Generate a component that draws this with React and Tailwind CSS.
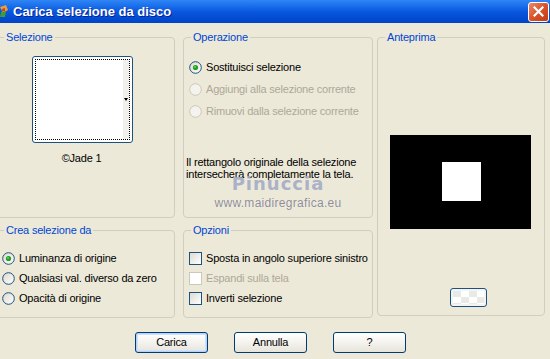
import React from "react";

const Group = ({ label, className, children }) => (
  <div className={"relative border border-[#D0CEBF] rounded-[4px] " + className}>
    <span className="absolute -top-[7px] left-[7px] px-[2px] bg-[#ECE9D8] text-[#0046D5] leading-[13px]">
      {label}
    </span>
    {children}
  </div>
);

const Radio = ({ checked, disabled }) => (
  <svg width="13" height="13" viewBox="0 0 13 13" className="shrink-0">
    <defs>
      <linearGradient id="rg" x1="0" y1="0" x2="1" y2="1">
        <stop offset="0" stopColor="#DCD9CD" />
        <stop offset="1" stopColor="#FFFFFF" />
      </linearGradient>
    </defs>
    <circle
      cx="6.5"
      cy="6.5"
      r="5.8"
      fill={disabled ? "#F4F3EE" : "url(#rg)"}
      stroke={disabled ? "#CAC8BB" : "#1C5180"}
      strokeWidth="1"
    />
    {checked && (
      <>
        <circle cx="6.5" cy="6.5" r="2.6" fill="#21A121" />
        <circle cx="6" cy="6" r="1" fill="#5CD05C" />
      </>
    )}
  </svg>
);

const Check = ({ disabled }) => (
  <div
    className={
      "w-[13px] h-[13px] shrink-0 border " +
      (disabled
        ? "border-[#CAC8BB] bg-white"
        : "border-[#1C5180] bg-gradient-to-br from-[#DCDBD3] to-white")
    }
  />
);

const Option = ({ children, disabled, control }) => (
  <div
    className={
      "flex items-center gap-[4px] h-[20px] whitespace-nowrap " +
      (disabled ? "text-[#ACA899]" : "text-black")
    }
  >
    {control}
    <span>{children}</span>
  </div>
);

const XpButton = ({ children, focused }) => (
  <button
    className={
      "w-[73px] h-[21px] rounded-[3px] border border-[#003C74] bg-gradient-to-b from-white via-[#F4F3EE] to-[#E6E4DA] text-black leading-none " +
      (focused ? "shadow-[inset_0_0_0_1px_#B9D1F6,inset_0_0_0_2px_#CEE3FB]" : "")
    }
  >
    {children}
  </button>
);

export default function App() {
  return (
    <div
      className="w-[550px] h-[359px] overflow-hidden bg-[#ECE9D8] text-[11px] tracking-[-0.2px] text-black"
      style={{ fontFamily: '"Liberation Sans", Arial, sans-serif' }}
    >
      {/* title bar */}
      <div className="h-[23px] flex items-center relative tracking-normal bg-gradient-to-b from-[#2F86F5] via-[#0858E0] to-[#0043C8]">
        <svg width="9" height="16" viewBox="0 0 9 16">
          <path d="M0 3 L6 1 L8 6 L3 9 Z" fill="#E7A03A" />
          <path d="M1 8 L6 7 L5 13 L0 13 Z" fill="#3E9C3A" />
          <path d="M2 5 L5 4 L5 7 L2 7 Z" fill="#D43B2A" />
        </svg>
        <span className="ml-[4px] text-white font-bold text-[13px] [text-shadow:1px_1px_0_#0A1E9A]">
          Carica selezione da disco
        </span>
        <div className="ml-auto mr-[1px] w-[21px] h-[20px] rounded-[3px] border border-white bg-gradient-to-br from-[#E98A6B] via-[#D9522A] to-[#C23A12] flex items-center justify-center">
          <svg width="11" height="11" viewBox="0 0 11 11">
            <path d="M1.5 1.5 L9.5 9.5 M9.5 1.5 L1.5 9.5" stroke="white" strokeWidth="2.2" strokeLinecap="square" />
          </svg>
        </div>
      </div>

      {/* panels */}
      <div className="flex pt-[14px]">
        <div className="flex flex-col -ml-[4px] w-[179px]">
          <Group label="Selezione" className="h-[181px]">
            <div className="ml-[35px] mt-[18px] w-[101px]">
              <div className="relative w-[101px] h-[87px] rounded-[3px] border border-[#1C5180] bg-white p-[2px]">
                <div className="w-full h-full border border-dotted border-black flex justify-end">
                  <div className="w-[6px] h-full bg-[#F1F0EC] flex items-center justify-center">
                    <div className="w-0 h-0 border-l-[2px] border-r-[2px] border-t-[3px] border-l-transparent border-r-transparent border-t-black" />
                  </div>
                </div>
              </div>
              <div className="mt-[9px] text-center leading-[13px] -ml-[2px]">©Jade 1</div>
            </div>
          </Group>
          <Group label="Crea selezione da" className="h-[88px] mt-[12px]">
            <div className="pl-[5px] pt-[17px]">
              <Option control={<Radio checked />}>Luminanza di origine</Option>
              <Option control={<Radio />}>Qualsiasi val. diverso da zero</Option>
              <Option control={<Radio />}>Opacità di origine</Option>
            </div>
          </Group>
        </div>

        <div className="flex flex-col ml-[8px] w-[190px]">
          <Group label="Operazione" className="h-[181px]">
            <div className="pl-[5px] pt-[18px] [&>div]:h-[22px]">
              <Option control={<Radio checked />}>Sostituisci selezione</Option>
              <Option disabled control={<Radio disabled />}>Aggiungi alla selezione corrente</Option>
              <Option disabled control={<Radio disabled />}>Rimuovi dalla selezione corrente</Option>
            </div>
            <div className="pl-[2px] mt-[34px] leading-[12px]">
              Il rettangolo originale della selezione
              <br />
              intersecherà completamente la tela.
            </div>
            <div className="absolute left-0 right-0 top-[137px] flex flex-col items-center pointer-events-none tracking-normal">
              <span
                className="text-[18px] font-bold leading-[18px] text-[#A2A9C6]/90 tracking-[1px]"
                style={{ fontFamily: '"DejaVu Sans", sans-serif' }}
              >
                Pinuccia
              </span>
              <span className="mt-[3px] text-[12px] leading-[14px] text-[#8C8C94] [text-shadow:0_0_1px_white] tracking-[0.3px]">
                www.maidiregrafica.eu
              </span>
            </div>
          </Group>
          <Group label="Opzioni" className="h-[88px] mt-[12px]">
            <div className="pl-[5px] pt-[17px]">
              <Option control={<Check />}>Sposta in angolo superiore sinistro</Option>
              <Option disabled control={<Check disabled />}>Espandi sulla tela</Option>
              <Option control={<Check />}>Inverti selezione</Option>
            </div>
          </Group>
        </div>

        <Group label="Anteprima" className="ml-[4px] w-[168px] h-[279px]">
          <div className="ml-[12px] mt-[97px] w-[141px] h-[94px] bg-black pl-[52px] pt-[27px]">
            <div className="w-[39px] h-[39px] bg-white" />
          </div>
          <div className="ml-[72px] mt-[59px] w-[37px] h-[19px] rounded-[3px] border border-[#1C5180] bg-[#F4F4F2] overflow-hidden p-[2px]">
            <div className="w-full h-full bg-[repeating-conic-gradient(#FFFFFF_0_25%,#E9E9E6_0_50%)] bg-[length:16px_12px]" />
          </div>
        </Group>
      </div>

      {/* buttons */}
      <div className="flex gap-[26px] pl-[135px] mt-[14px]">
        <XpButton focused>Carica</XpButton>
        <XpButton>Annulla</XpButton>
        <XpButton>?</XpButton>
      </div>
    </div>
  );
}
